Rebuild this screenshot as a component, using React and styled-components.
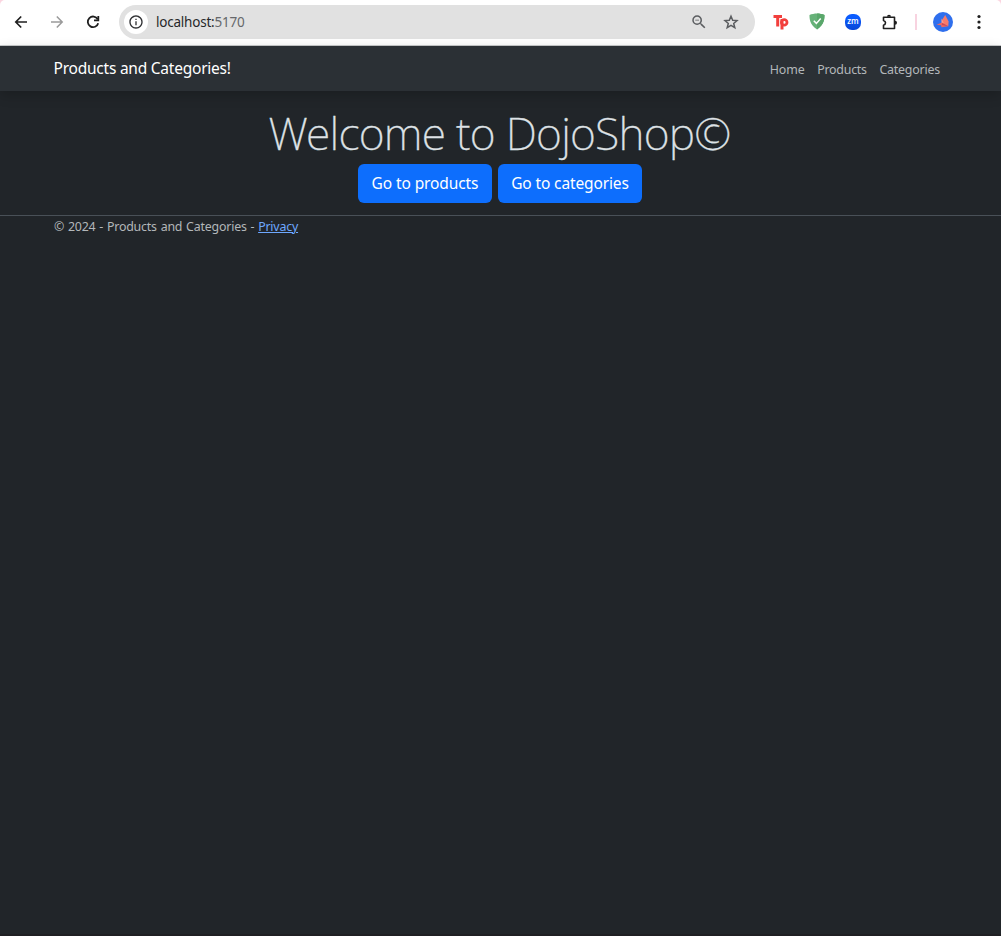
import React from "react";
import styled, { createGlobalStyle } from "styled-components";
import { MdInfoOutline, MdZoomOut } from "react-icons/md";

const GlobalStyle = createGlobalStyle`
  * { box-sizing: border-box; }
  body {
    margin: 0;
    background: #212529;
    font-family: "Segoe UI", "Noto Sans", "Open Sans", sans-serif;
    color: #dee2e6;
  }
`;

const Window = styled.div`
  display: flex;
  flex-direction: column;
  height: 936px;
  overflow: hidden;
  background: #212529;
  border-bottom: 2px solid #1f1f23;
`;

const ChromeFrame = styled.div`
  flex: none;
  background: #fbd5e0;
`;

const BrowserBar = styled.div`
  display: flex;
  align-items: center;
  height: 46px;
  padding: 0 12px 2px;
  background: #fff;
  border-bottom: 1px solid #c9cbcc;
  border-radius: 5px 5px 0 0;
`;

const BarButton = styled.span`
  flex: none;
  display: flex;
  align-items: center;
  justify-content: center;
  width: ${(p) => p.$w || 18}px;
  height: 24px;
  margin-left: ${(p) => p.$gap || 0}px;
  color: ${(p) => p.$color || "#1f1f1f"};
`;

const AddressBar = styled.div`
  flex: none;
  display: flex;
  align-items: center;
  width: 636px;
  height: 34px;
  margin-left: 17px;
  padding: 0 15px 0 5px;
  border-radius: 17px;
  background: #e1e1e1;
`;

const SiteInfo = styled.span`
  display: flex;
  align-items: center;
  justify-content: center;
  width: 24px;
  height: 24px;
  border-radius: 50%;
  background: #fff;
  color: #303134;
`;

const Url = styled.span`
  flex: 1;
  margin-left: 8px;
  font-size: 13.5px;
  letter-spacing: -0.22px;
  color: #27282a;
  span { color: #66686b; }
`;

const Divider = styled.span`
  flex: none;
  width: 2px;
  height: 16px;
  margin-left: 16px;
  background: #f8d3e0;
`;

const Navbar = styled.header`
  flex: none;
  display: flex;
  align-items: center;
  justify-content: space-between;
  height: 45px;
  padding: 0 61px 0 53.5px;
  background: #2b3035;
  box-shadow: 0 4px 12px rgba(0, 0, 0, 0.2);
`;

const Brand = styled.a`
  padding-bottom: 1px;
  font-size: 15.5px;
  line-height: 24px;
  letter-spacing: ${(p) => p.$track}px;
  color: #fff;
`;

const NavLinks = styled.nav`
  display: flex;
  gap: 12.6px;
  padding-top: 2px;
`;

const NavLink = styled.a`
  font-size: 12.4px;
  letter-spacing: ${(p) => p.$track}px;
  line-height: 19px;
  color: #b3b7ba;
`;

const Main = styled.main`
  flex: none;
  height: 124px;
  padding-top: 15px;
  text-align: center;
`;

const Title = styled.h1`
  margin: 0 2px 0 0;
  font-size: 44.5px;
  font-weight: 200;
  line-height: 54px;
  letter-spacing: ${(p) => p.$track}px;
  white-space: nowrap;
  color: #dee2e6;
  -webkit-text-stroke: 0.3px #dee2e6;
`;

const Actions = styled.div`
  display: flex;
  justify-content: center;
  gap: 6px;
  margin: 4px 1px 0 0;
`;

const Button = styled.button`
  width: ${(p) => p.$w}px;
  height: 39px;
  padding: 0 0 1px;
  border: 0;
  border-radius: 6px;
  background: #0d6efd;
  color: #fff;
  font: inherit;
  font-size: 15.5px;
  letter-spacing: ${(p) => p.$track}px;
  white-space: nowrap;
`;

const Footer = styled.footer`
  padding: 1px 54px;
  border-top: 1px solid #495057;
  font-size: 12.4px;
  line-height: 20px;
  letter-spacing: ${(p) => p.$track}px;
  word-spacing: 0.8px;
  color: #b3b7ba;
  a { color: #6ea8fe; text-decoration: underline; }
`;

const BackArrow = () => (
  <svg width="18" height="18" viewBox="0 0 18 18" fill="none" stroke="currentColor" strokeWidth="1.7">
    <path d="M15 9H4M9.2 3.5 3.8 9l5.4 5.5" />
  </svg>
);

const ForwardArrow = () => (
  <svg width="18" height="18" viewBox="0 0 18 18" fill="none" stroke="currentColor" strokeWidth="1.5">
    <path d="M3 9h11M8.8 3.5 14.2 9l-5.4 5.5" />
  </svg>
);

const Reload = () => (
  <svg width="18" height="18" viewBox="0 0 18 18" fill="none" stroke="currentColor" strokeWidth="1.8">
    <path d="M13.7 6.2A5.3 5.3 0 1 0 14.2 10.2" />
    <path d="M14.3 3V7.3H10" />
  </svg>
);

const Star = () => (
  <svg width="18" height="18" viewBox="0 0 18 18" fill="none" stroke="currentColor" strokeWidth="1.5">
    <path d="M9 3.2 10.7 7.2 15 7.6 11.7 10.4 12.8 14.7 9 12.4 5.2 14.7 6.3 10.4 3 7.600 7.300 7.200Z" />
  </svg>
);

const Puzzle = () => (
  <svg width="18" height="18" viewBox="0 0 18 18">
    <path
      d="M2.5 4.2H13.5V15.5H2.5V12.3C5.2 11.5 5.2 8.2 2.5 7.4Z"
      fill="none"
      stroke="currentColor"
      strokeWidth="1.6"
      strokeLinejoin="round"
    />
    <path d="M6 3.7a2 2 0 0 1 4 0ZM14 7.8a2 2 0 0 1 0 4Z" fill="currentColor" />
  </svg>
);

const MoreDots = () => (
  <svg width="6" height="18" viewBox="0 0 6 18" fill="currentColor">
    <circle cx="3" cy="3.5" r="1.6" />
    <circle cx="3" cy="9" r="1.6" />
    <circle cx="3" cy="14.5" r="1.6" />
  </svg>
);

const Toolpad = () => (
  <svg width="16" height="16" viewBox="0 0 16 16" fill="none" stroke="#f23f3c" strokeWidth="3">
    <path d="M.5 2.5H9M4.7 2V12.5" />
    <path d="M9 5V15.5" />
    <circle cx="11.2" cy="8.4" r="2.8" strokeWidth="2.8" />
  </svg>
);

const Shield = () => (
  <svg width="16" height="17" viewBox="0 0 16 17">
    <path d="M8 .5C5.5.5 2.6 1 .5 2c0 3-.2 9.5 7.5 14.5C15.7 11.5 15.5 5 15.5 2 13.4 1 10.5.5 8 .5Z" fill="#67b279" />
    <path d="M8 .5V16.5C15.7 11.5 15.5 5 15.5 2 13.4 1 10.5.5 8 .5Z" fill="#5aa76b" />
    <path d="m4.8 7.8 2.6 2.6 4.3-4.8" fill="none" stroke="#fff" strokeWidth="1.5" />
  </svg>
);

const ZoomBadge = styled.span`
  display: flex;
  align-items: center;
  justify-content: center;
  width: 16px;
  height: 16px;
  border-radius: 7px;
  background: linear-gradient(#0b5cff 20%, #0845d6);
  color: #fff;
  font: 600 8px/8px "Open Sans", sans-serif;
  padding-bottom: 1px;
`;

const Avatar = () => (
  <svg width="20" height="20" viewBox="0 0 20 20">
    <circle cx="10" cy="10" r="10" fill="#2f6fed" />
    <path d="M12.2 3 15.6 9.5 15.3 14.3 10 12 8.7 8.5Z" fill="#f87b6b" />
    <path d="M8.5 6.5 11 11.5 8.5 12Z" fill="#ffa08c" />
    <path d="M3.5 12.8 9 10.5 15.3 14.3 8.5 15.3 8 13.2Z" fill="#f0685f" />
    <path d="m9.2 11 6.1 3.3-6.5-1.3Z" fill="#c84a5a" />
  </svg>
);

export default function App() {
  return (
    <Window>
      <GlobalStyle />
      <ChromeFrame>
        <BrowserBar>
          <BarButton><BackArrow /></BarButton>
          <BarButton $gap={18} $color="#9a9a9a"><ForwardArrow /></BarButton>
          <BarButton $gap={18}><Reload /></BarButton>
          <AddressBar>
            <SiteInfo><MdInfoOutline size={16} /></SiteInfo>
            <Url>localhost:<span>5170</span></Url>
            <BarButton $color="#5b5d60"><MdZoomOut size={20} /></BarButton>
            <BarButton $gap={14} $color="#5b5d60"><Star /></BarButton>
          </AddressBar>
          <BarButton $gap={17}><Toolpad /></BarButton>
          <BarButton $gap={18}><Shield /></BarButton>
          <BarButton $gap={18}><ZoomBadge>zm</ZoomBadge></BarButton>
          <BarButton $gap={19}><Puzzle /></BarButton>
          <Divider />
          <BarButton $gap={16} $w={20}><Avatar /></BarButton>
          <BarButton $gap={17}><MoreDots /></BarButton>
        </BrowserBar>
      </ChromeFrame>
      <Navbar>
        <Brand $track={-0.23}>Products and Categories!</Brand>
        <NavLinks>
          <NavLink $track={-0.13}>Home</NavLink>
          <NavLink $track={-0.23}>Products</NavLink>
          <NavLink $track={-0.2}>Categories</NavLink>
        </NavLinks>
      </Navbar>
      <Main>
        <Title $track={-0.77}>Welcome to DojoShop©</Title>
        <Actions>
          <Button $w={134} $track={-0.1}>Go to products</Button>
          <Button $w={144} $track={-0.13}>Go to categories</Button>
        </Actions>
      </Main>
      <Footer $track={-0.2}>© 2024 - Products and Categories - <a>Privacy</a></Footer>
    </Window>
  );
}
